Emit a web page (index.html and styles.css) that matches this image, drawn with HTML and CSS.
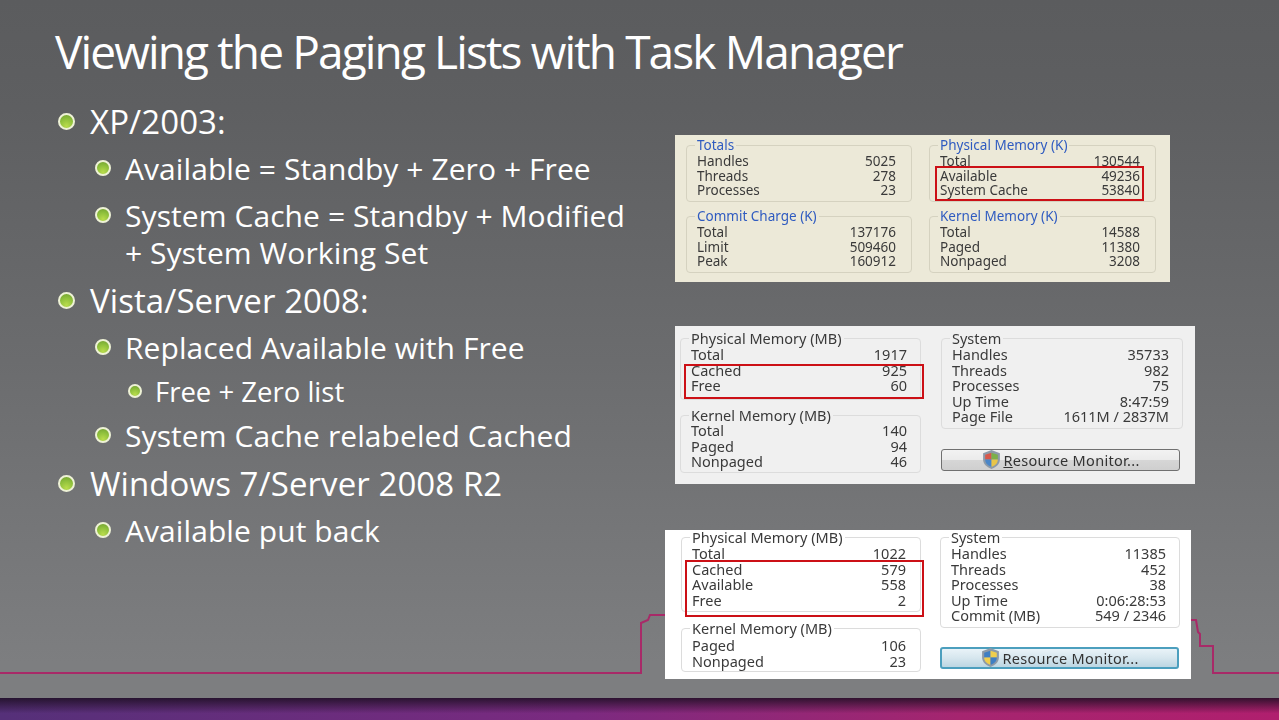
FILE: index.html
```html
<!DOCTYPE html>
<html lang="en">
<head>
<meta charset="utf-8">
<title>Viewing the Paging Lists with Task Manager</title>
<link rel="stylesheet" href="styles.css">
</head>
<body>
<div class="slide">
  <svg class="skyline" width="1279" height="720" viewBox="0 0 1279 720" aria-hidden="true">
    <polyline points="0,673 641,673 641,623 648,620 650,615 670,615" />
    <polyline points="1188,620 1196,620 1198,632 1200,634 1200,646 1213,646 1213,673 1279,673" />
  </svg>
  <h1 class="title">Viewing the Paging Lists with Task Manager</h1>
  <main class="content">
    <ul class="points">
      <li class="point l1"><span class="dot"></span><span>XP/2003:</span></li>
      <li class="point l2"><span class="dot"></span><span>Available = Standby + Zero + Free</span></li>
      <li class="point l2"><span class="dot"></span><span>System Cache = Standby + Modified<br>+ System Working Set</span></li>
      <li class="point l1"><span class="dot"></span><span>Vista/Server 2008:</span></li>
      <li class="point l2"><span class="dot"></span><span>Replaced Available with Free</span></li>
      <li class="point l3"><span class="dot"></span><span>Free + Zero list</span></li>
      <li class="point l2"><span class="dot"></span><span>System Cache relabeled Cached</span></li>
      <li class="point l1"><span class="dot"></span><span>Windows 7/Server 2008 R2</span></li>
      <li class="point l2"><span class="dot"></span><span>Available put back</span></li>
    </ul>
    <div class="shots">
      <section class="panel xp">
        <div class="col">
          <fieldset class="group"><legend>Totals</legend>
            <div class="row"><span>Handles</span><span>5025</span></div>
            <div class="row"><span>Threads</span><span>278</span></div>
            <div class="row"><span>Processes</span><span>23</span></div>
          </fieldset>
          <fieldset class="group"><legend>Commit Charge (K)</legend>
            <div class="row"><span>Total</span><span>137176</span></div>
            <div class="row"><span>Limit</span><span>509460</span></div>
            <div class="row"><span>Peak</span><span>160912</span></div>
          </fieldset>
        </div>
        <div class="col">
          <fieldset class="group"><legend>Physical Memory (K)</legend>
            <div class="row"><span>Total</span><span>130544</span></div>
            <div class="row"><span>Available</span><span>49236</span></div>
            <div class="row"><span>System Cache</span><span>53840</span></div>
          </fieldset>
          <fieldset class="group"><legend>Kernel Memory (K)</legend>
            <div class="row"><span>Total</span><span>14588</span></div>
            <div class="row"><span>Paged</span><span>11380</span></div>
            <div class="row"><span>Nonpaged</span><span>3208</span></div>
          </fieldset>
        </div>
        <div class="mark"></div>
      </section>
      <section class="panel vista">
        <div class="col">
          <fieldset class="group"><legend>Physical Memory (MB)</legend>
            <div class="row"><span>Total</span><span>1917</span></div>
            <div class="row"><span>Cached</span><span>925</span></div>
            <div class="row"><span>Free</span><span>60</span></div>
          </fieldset>
          <fieldset class="group"><legend>Kernel Memory (MB)</legend>
            <div class="row"><span>Total</span><span>140</span></div>
            <div class="row"><span>Paged</span><span>94</span></div>
            <div class="row"><span>Nonpaged</span><span>46</span></div>
          </fieldset>
        </div>
        <div class="col">
          <fieldset class="group"><legend>System</legend>
            <div class="row"><span>Handles</span><span>35733</span></div>
            <div class="row"><span>Threads</span><span>982</span></div>
            <div class="row"><span>Processes</span><span>75</span></div>
            <div class="row"><span>Up Time</span><span>8:47:59</span></div>
            <div class="row"><span>Page File</span><span>1611M / 2837M</span></div>
          </fieldset>
          <div class="monitor">
            <svg class="shield" width="21" height="21" viewBox="0 0 20 20" aria-hidden="true">
              <path d="M10 1 L18 4 V10 C18 14.500 14 17.500 10 19 C6 17.500 2 14.500 2 10 V4 Z" fill="#8d9aa8"/>
              <path d="M4 5.500 L10 3.500 V10 H4 Z" fill="#d8584a"/>
              <path d="M10 3.500 L16 5.500 V10 H10 Z" fill="#7cb04a"/>
              <path d="M4 10 H10 V17 C7 16 4 14 4 10 Z" fill="#4a86c8"/>
              <path d="M10 10 H16 C16 14 13 16 10 17 Z" fill="#e8c548"/>
            </svg>
            <span><u>R</u>esource Monitor...</span>
          </div>
        </div>
        <div class="mark"></div>
      </section>
      <section class="panel seven">
        <div class="col">
          <fieldset class="group"><legend>Physical Memory (MB)</legend>
            <div class="row"><span>Total</span><span>1022</span></div>
            <div class="row"><span>Cached</span><span>579</span></div>
            <div class="row"><span>Available</span><span>558</span></div>
            <div class="row"><span>Free</span><span>2</span></div>
          </fieldset>
          <fieldset class="group"><legend>Kernel Memory (MB)</legend>
            <div class="row"><span>Paged</span><span>106</span></div>
            <div class="row"><span>Nonpaged</span><span>23</span></div>
          </fieldset>
        </div>
        <div class="col">
          <fieldset class="group"><legend>System</legend>
            <div class="row"><span>Handles</span><span>11385</span></div>
            <div class="row"><span>Threads</span><span>452</span></div>
            <div class="row"><span>Processes</span><span>38</span></div>
            <div class="row"><span>Up Time</span><span>0:06:28:53</span></div>
            <div class="row"><span>Commit (MB)</span><span>549 / 2346</span></div>
          </fieldset>
          <div class="monitor">
            <svg class="shield" width="21" height="21" viewBox="0 0 20 20" aria-hidden="true">
              <path d="M10 1 L18 4 V10 C18 14.500 14 17.500 10 19 C6 17.500 2 14.500 2 10 V4 Z" fill="#8d9aa8"/>
              <path d="M4 5.500 L10 3.500 V10 H4 Z" fill="#3f7fc4"/>
              <path d="M10 3.500 L16 5.500 V10 H10 Z" fill="#f0cf4e"/>
              <path d="M4 10 H10 V17 C7 16 4 14 4 10 Z" fill="#f0cf4e"/>
              <path d="M10 10 H16 C16 14 13 16 10 17 Z" fill="#3f7fc4"/>
            </svg>
            <span>Resource Monitor...</span>
          </div>
        </div>
        <div class="mark"></div>
      </section>
    </div>
  </main>
  <footer class="band"></footer>
</div>
</body>
</html>
```

FILE: styles.css
```css
* { box-sizing: border-box; }
html, body { margin: 0; padding: 0; }
body { width: 1279px; height: 720px; overflow: hidden; }

.slide {
  position: relative;
  z-index: 0;
  width: 1279px;
  height: 720px;
  display: flex;
  flex-direction: column;
  color: #fff;
  font-family: "Open Sans", "Noto Sans", sans-serif;
  background: linear-gradient(180deg, #5b5c5e 0%, #5e5f61 15%, #6b6c6e 50%, #7d7e80 92%);
}
.skyline { position: absolute; left: 0; top: 0; z-index: -1; }
.skyline polyline { fill: none; stroke: #a82a68; stroke-width: 2; }

.title {
  margin: 0;
  padding: 20px 0 0 55px;
  height: 103px;
  font-size: 46px;
  line-height: 62px;
  font-weight: 400;
  letter-spacing: -1.87px;
  white-space: nowrap;
}

.content { flex: 1; display: flex; min-height: 0; }

.points { list-style: none; margin: 0; padding: 0; width: 665px; flex: none; }
.point { display: flex; align-items: flex-start; line-height: 37px; white-space: nowrap; }
.dot {
  flex: none;
  border-radius: 50%;
  border: 2px solid #eef2d6;
  background: radial-gradient(circle at 50% 85%, #b9dc4c 0%, #8fc03c 55%, #6f9f30 100%);
}
.l1 { margin-top: 11px; padding-left: 58px; font-size: 33px; letter-spacing: 0.08px; gap: 15px; }
.l1:first-child { margin-top: 0; }
.l1 .dot { width: 17px; height: 17px; margin-top: 10px; }
.l2 { margin-top: 10px; padding-left: 95px; font-size: 30px; letter-spacing: 0.08px; gap: 14px; }
.l2 .dot { width: 16px; height: 16px; margin-top: 10px; }
.l3 { margin-top: 7px; padding-left: 128px; font-size: 27.5px; gap: 13px; }
.l3 .dot { width: 14px; height: 14px; margin-top: 11px; }
.l3 + .l2 { margin-top: 7px; }

.shots { flex: 1; }
.panel {
  position: relative;
  display: grid;
  color: #3a3a3a;
  font-family: "Noto Sans", "DejaVu Sans", sans-serif;
  font-size: 14.5px;
  filter: blur(0.35px);
}
.col { display: flex; flex-direction: column; min-width: 0; }
.group {
  margin: 0;
  min-width: 0;
  padding: 2px 13px 3px 10px;
  border: 1px solid #dcdcdc;
  border-radius: 4px;
}
.group legend {
  margin-left: -2px;
  padding: 0 2px;
  height: 14px;
  line-height: 14px;
}
.row { display: flex; justify-content: space-between; }
.mark { position: absolute; border: 2px solid #cc1016; }

.xp {
  margin: 32px 0 0 10px;
  width: 495px;
  height: 147px;
  padding: 3px 0 0 11px;
  grid-template-columns: 226px 227px;
  column-gap: 17px;
  font-size: 13.5px;
  background: #ece9d8;
}
.xp .group { border-color: #d5d2c0; height: 64px; padding-right: 15px; }
.xp .group + .group { margin-top: 7px; }
.xp .row { height: 14.700px; line-height: 14.700px; }
.xp legend { color: #2f5bc0; }
.xp .mark { left: 260px; top: 31px; width: 209px; height: 35px; }

.vista {
  margin: 44px 0 0 10px;
  width: 520px;
  height: 158px;
  padding: 5px 0 0 5px;
  grid-template-columns: 241px 242px;
  column-gap: 20px;
  background: #f0f0f0;
}
.vista .row, .seven .row { height: 15.500px; line-height: 15.500px; }
.vista .col:first-child .group { height: 69px; }
.vista .col:first-child .group + .group { margin-top: 8px; height: 65px; padding-top: 1px; }
.vista .col:last-child .group { height: 101px; }
.vista .mark { left: 9px; top: 38px; width: 240px; height: 35px; }
.vista .monitor { margin-top: 20px; width: 239px; }

.seven {
  margin: 46px 0 0 0;
  width: 526px;
  height: 149px;
  padding: 0 0 0 16px;
  grid-template-columns: 240px 240px;
  column-gap: 19px;
  background: #fff;
}
.seven .col:first-child .group { height: 82px; padding-right: 14px; }
.seven .col:first-child .group + .group { margin-top: 9px; height: 51px; padding-top: 3px; }
.seven .col:last-child .group { height: 100px; }
.seven .mark { left: 20px; top: 30px; width: 239px; height: 57px; }
.seven .monitor {
  margin-top: 19px;
  width: 239px;
  border: 2px solid #4c9fbe;
  background: linear-gradient(180deg, #e9f3f8 0%, #d6e6ee 50%, #bcd6e2 100%);
}

.monitor {
  height: 22px;
  display: flex;
  align-items: center;
  justify-content: center;
  gap: 1px;
  border: 1px solid #707070;
  border-radius: 3px;
  background: linear-gradient(180deg, #f2f2f2 0%, #ebebeb 48%, #d6d6d6 52%, #cfcfcf 100%);
  color: #333;
  letter-spacing: 0.3px;
}
.shield { flex: none; }

.band {
  flex: none;
  height: 22px;
  background:
    linear-gradient(180deg, rgba(30, 15, 35, 0.85) 0%, rgba(30, 15, 35, 0) 70%),
    linear-gradient(90deg, #553079 0%, #7b2a80 45%, #a5256f 75%, #b01f6e 100%);
}
```
